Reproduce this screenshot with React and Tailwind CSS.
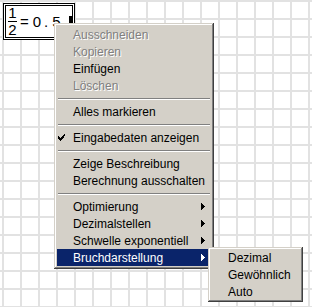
import { Fragment } from 'react'

const ITEMS = [
  { label: 'Ausschneiden', disabled: true },
  { label: 'Kopieren', disabled: true },
  { label: 'Einfügen' },
  { label: 'Löschen', disabled: true },
  { sep: true },
  { label: 'Alles markieren' },
  { sep: true },
  { label: 'Eingabedaten anzeigen', checked: true },
  { sep: true },
  { label: 'Zeige Beschreibung' },
  { label: 'Berechnung ausschalten' },
  { sep: true },
  { label: 'Optimierung', sub: true },
  { label: 'Dezimalstellen', sub: true },
  { label: 'Schwelle exponentiell', sub: true },
  { label: 'Bruchdarstellung', sub: true, active: true },
]

const SUB_ITEMS = ['Dezimal', 'Gewöhnlich', 'Auto']

const frame =
  'bg-[#d4d0c8] shadow-[inset_-1px_-1px_#404040,inset_1px_1px_#d4d0c8,inset_-2px_-2px_#808080,inset_2px_2px_#ffffff]'

function Arrow({ white }) {
  return (
    <svg width="4" height="7" viewBox="0 0 4 7" className="shrink-0">
      <path d="M0 0h1v7H0zM1 1h1v5H1zM2 2h1v3H2zM3 3h1v1H3z" fill={white ? '#fff' : '#000'} />
    </svg>
  )
}

function Check() {
  return (
    <svg width="7" height="7" viewBox="0 0 7 7" className="shrink-0">
      <path d="M6 0h1v2H6zM5 1h1v3H5zM4 2h1v3H4zM3 3h1v3H3zM2 4h1v3H2zM1 3h1v3H1zM0 2h1v3H0z" fill="#000" />
    </svg>
  )
}

function MenuItem({ item }) {
  if (item.sep) {
    return (
      <div className="flex h-[9px] items-center px-[1px]">
        <div className="h-[2px] w-full border-t border-b border-t-[#808080] border-b-white" />
      </div>
    )
  }
  return (
    <div
      className={`flex h-[17px] items-center pr-[6px] ${item.active ? 'bg-[#0a246a] text-white' : 'text-black'}`}
    >
      <div className="flex w-[16px] items-center pl-[1px]">{item.checked && <Check />}</div>
      <span
        className={`flex-1 whitespace-nowrap leading-none ${item.disabled ? 'text-[#808080] [text-shadow:1px_1px_0_#fff]' : ''}`}
      >
        {item.label}
      </span>
      {item.sub && <Arrow white={item.active} />}
    </div>
  )
}

export default function App() {
  return (
    <div className="relative h-[307px] w-[312px] overflow-hidden bg-white bg-[linear-gradient(to_right,#e2e2e2_2px,transparent_2px),linear-gradient(to_bottom,#e2e2e2_2px,transparent_2px)] bg-[size:18px_18px] bg-[position:2px_0px] font-['Liberation_Sans',Arial,sans-serif] text-[12px]">
      <div className="absolute left-[3px] top-[3px] flex h-[37px] w-[72px] items-center whitespace-nowrap border-[3px] border-double border-black bg-white pl-[2px] text-[15px] leading-none">
        <div className="flex shrink-0 flex-col items-center leading-[14px]">
          <span>1</span>
          <span className="my-[1px] h-px w-[9px] bg-black" />
          <span>2</span>
        </div>
        <span className="ml-[3px] shrink-0">=</span>
        <span className="ml-[4px] shrink-0">0</span>
        <span className="ml-[3px] shrink-0">.</span>
        <span className="ml-[4px] shrink-0">5</span>
        <span className="mb-[4px] ml-[8px] h-[8px] w-[4px] shrink-0 bg-black" />
      </div>

      <div className={`absolute left-[54px] top-[23px] w-[160px] p-[3px] ${frame}`}>
        {ITEMS.map((item, i) => (
          <Fragment key={i}>
            <MenuItem item={item} />
          </Fragment>
        ))}
      </div>

      <div className={`absolute left-[208px] top-[247px] w-[95px] p-[2px] ${frame}`}>
        {SUB_ITEMS.map((s) => (
          <div key={s} className="flex h-[17px] items-center pl-[18px] leading-none text-black">
            {s}
          </div>
        ))}
      </div>
    </div>
  )
}
